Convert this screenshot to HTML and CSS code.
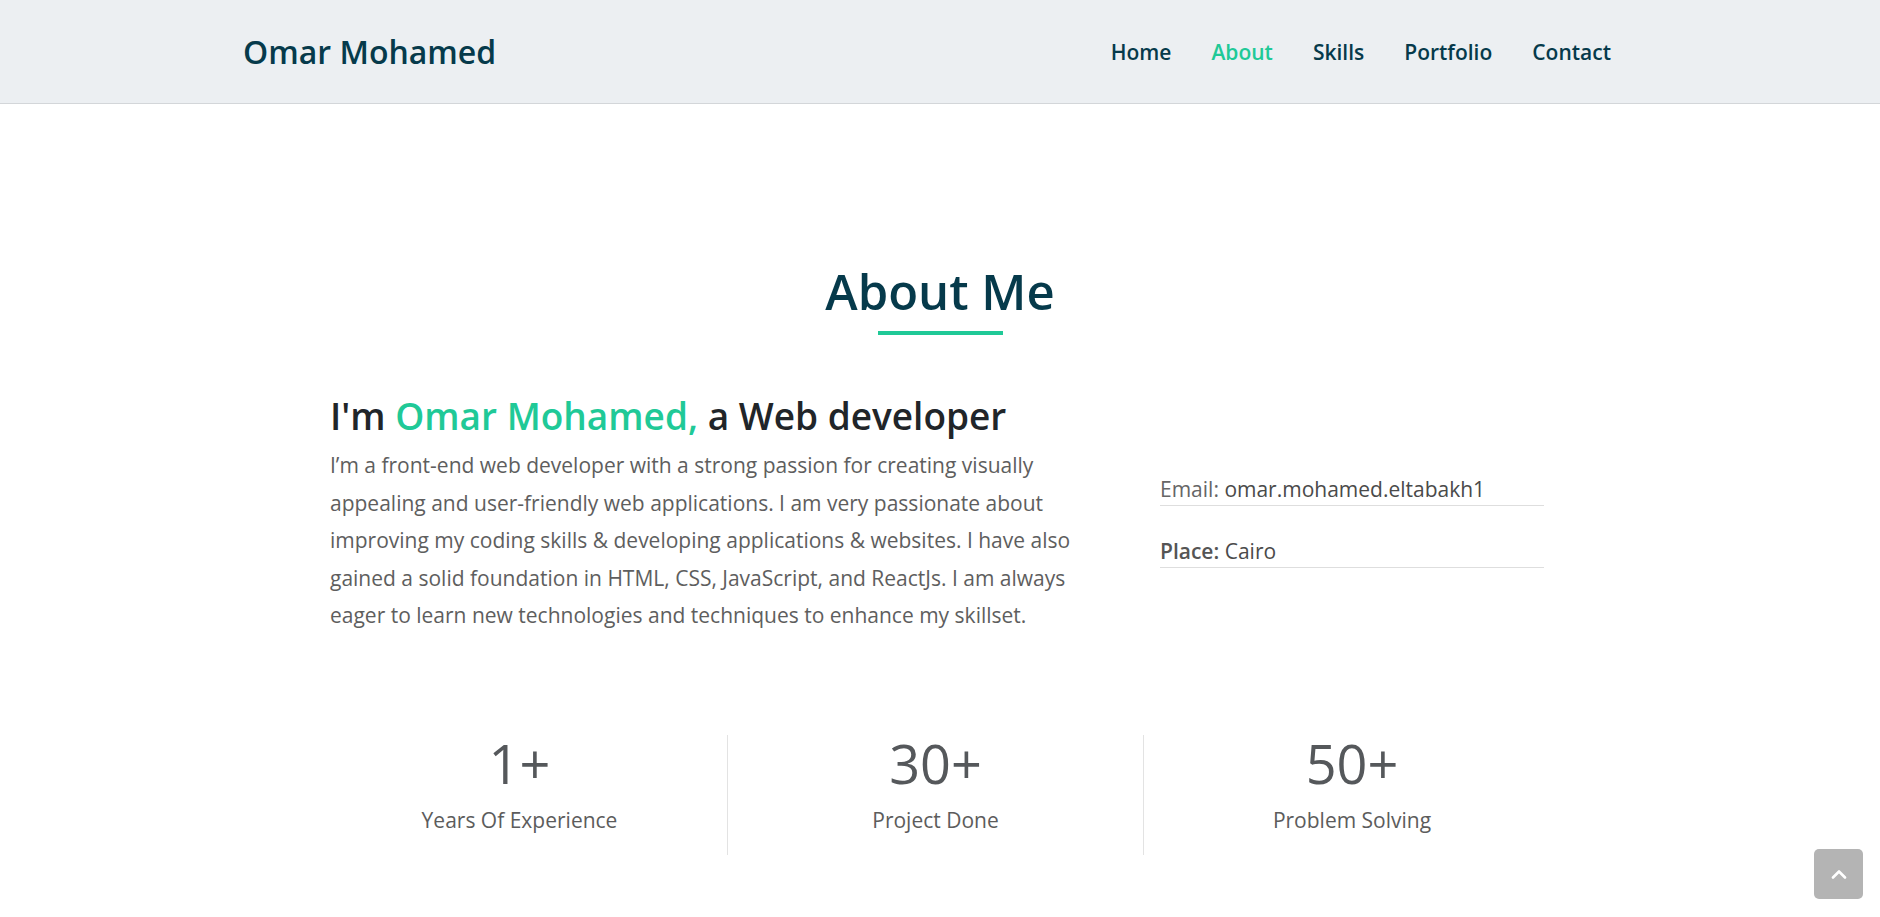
FILE: index.html
```html
<!DOCTYPE html>
<html lang="en">
<head>
<meta charset="utf-8">
<title>Omar Mohamed</title>
<link rel="stylesheet" href="styles.css">
</head>
<body>
<header class="navbar">
  <div class="nav-inner">
    <a class="brand" href="#">Omar Mohamed</a>
    <nav>
      <ul class="nav-links">
        <li><a href="#">Home</a></li>
        <li><a href="#" class="active">About</a></li>
        <li><a href="#">Skills</a></li>
        <li><a href="#">Portfolio</a></li>
        <li><a href="#">Contact</a></li>
      </ul>
    </nav>
  </div>
</header>

<section class="about">
  <h2 class="section-title">About Me</h2>
  <div class="title-bar"></div>

  <div class="about-row">
    <div class="about-text">
      <h3 class="intro">I'm <span class="accent">Omar Mohamed,</span> a Web developer</h3>
      <p class="bio">I’m a front-end web developer with a strong passion for creating visually appealing and user-friendly web applications. I am very passionate about improving my coding skills &amp; developing applications &amp; websites. I have also gained a solid foundation in HTML, CSS, JavaScript, and ReactJs. I am always eager to learn new technologies and techniques to enhance my skillset.</p>
    </div>
    <div class="about-info">
      <div class="info-item"><span class="info-label">Email:</span> <span class="info-value">omar.mohamed.eltabakh1</span></div>
      <div class="info-item"><span class="info-label bold">Place:</span> <span class="info-value">Cairo</span></div>
    </div>
  </div>

  <div class="stats">
    <div class="stat">
      <div class="stat-num">1+</div>
      <div class="stat-label">Years Of Experience</div>
    </div>
    <div class="stat">
      <div class="stat-num">30+</div>
      <div class="stat-label">Project Done</div>
    </div>
    <div class="stat">
      <div class="stat-num">50+</div>
      <div class="stat-label">Problem Solving</div>
    </div>
  </div>
</section>

<a class="back-top" href="#" aria-label="Back to top">
  <svg width="16" height="10" viewBox="0 0 16 10"><path d="M2 8.5 L8 2.5 L14 8.5" fill="none" stroke="#fff" stroke-width="2.6" stroke-linecap="round" stroke-linejoin="round"/></svg>
</a>
</body>
</html>
```

FILE: styles.css
```css
* { box-sizing: border-box; }

html, body {
  margin: 0;
  padding: 0;
  background: #ffffff;
  font-family: "Open Sans", "Liberation Sans", sans-serif;
  color: #555;
}

a { text-decoration: none; }

.navbar {
  height: 104px;
  background: #eceff2;
  border-bottom: 1px solid #d3d6d9;
}

.nav-inner {
  height: 103px;
  display: flex;
  align-items: center;
  justify-content: space-between;
  padding: 0 269px 0 243px;
}

.brand {
  font-size: 32px;
  font-weight: 600;
  color: #063a4b;
}

.nav-links {
  list-style: none;
  margin: 0;
  padding: 0;
  display: flex;
  gap: 40px;
}

.nav-links a {
  font-size: 21px;
  font-weight: 600;
  color: #063a4b;
}

.nav-links a.active { color: #20c997; }

.about {
  padding-top: 157px;
  padding-bottom: 60px;
}

.section-title {
  margin: 0;
  text-align: center;
  font-size: 49px;
  line-height: 60px;
  font-weight: 600;
  color: #063a4b;
}

.title-bar {
  width: 125px;
  height: 4px;
  background: #20c997;
  margin: 10px auto 0;
}

.about-row {
  max-width: 1220px;
  margin: 59px auto 0;
  padding-right: 6px;
  display: grid;
  grid-template-columns: 790px 384px;
  justify-content: space-between;
}

.intro {
  margin: 0;
  font-size: 37px;
  line-height: 44px;
  font-weight: 600;
  color: #212529;
}

.accent { color: #20c997; }

.bio {
  margin: 9px 0 0;
  font-size: 21px;
  line-height: 37.5px;
  color: #5e5e5e;
}

.about-info {
  padding-top: 80px;
}

.info-item {
  font-size: 21px;
  line-height: 30px;
  padding-bottom: 1px;
  border-bottom: 1px solid #dedede;
  margin-bottom: 30px;
  color: #5c5c5c;
}

.info-label { font-weight: 400; color: #666; }
.info-label.bold { font-weight: 600; color: #555; }
.info-value { font-weight: 500; color: #4a4a4a; }

.stats {
  max-width: 1256px;
  margin: 100px auto 0;
  padding-right: 8px;
  display: grid;
  grid-template-columns: repeat(3, 1fr);
}

.stat {
  text-align: center;
  padding-bottom: 20px;
  border-right: 1px solid #e3e3e3;
}

.stat:last-child { border-right: none; }

.stat-num {
  font-size: 54px;
  line-height: 56px;
  font-weight: 400;
  color: #55585b;
}

.stat-label {
  margin-top: 14px;
  font-size: 21px;
  line-height: 30px;
  color: #5c5c5c;
}

.back-top {
  position: fixed;
  right: 17px;
  bottom: 18px;
  width: 49px;
  height: 50px;
  border-radius: 5px;
  background: #b4b4b4;
  display: flex;
  align-items: center;
  justify-content: center;
}
```
